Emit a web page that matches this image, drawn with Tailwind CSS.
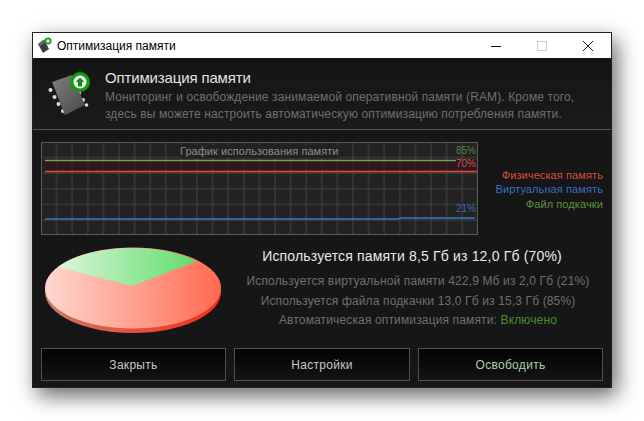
<!DOCTYPE html>
<html lang="en">
<head>
    <meta charset="UTF-8">
    <title>Оптимизация памяти</title>
    <script src="https://cdn.jsdelivr.net/npm/@tailwindcss/browser@4"></script>
</head>
<body class="bg-white w-[644px] h-[421px] overflow-hidden font-['Liberation_Sans',sans-serif]">
    <div class="pt-8 pl-8">
        <div class="w-[580px] h-[356px] flex flex-col bg-[#161616] border border-[#222] shadow-[5px_8px_20px_rgba(0,0,0,0.6)]">
            <!-- title bar -->
            <div class="h-[25px] bg-white flex items-center shrink-0 text-black">
                <svg class="ml-[3px] w-[17px] h-[17px]" viewBox="0 0 17 17">
                    <path d="M2 7 L8 2.5 L13 12 L7 16 Z" fill="#3c3c3c"/>
                    <path d="M2 7 L8 2.5 L9 5 L4 9 Z" fill="#666"/>
                    <circle cx="12" cy="4" r="3.6" fill="#16a016"/>
                    <circle cx="12" cy="4" r="1.7" fill="#dff5df"/>
                </svg>
                <span class="ml-[4px] text-[12px]">Оптимизация памяти</span>
                <div class="ml-auto flex items-center">
                    <svg class="w-[46px] h-[24px]" viewBox="0 0 46 24"><path d="M18 12.5 H28" stroke="#111" stroke-width="1"/></svg>
                    <svg class="w-[46px] h-[24px]" viewBox="0 0 46 24"><rect x="18.5" y="7.5" width="9" height="9" fill="none" stroke="#ccc"/></svg>
                    <svg class="w-[46px] h-[24px]" viewBox="0 0 46 24"><path d="M18 7 L28 17 M28 7 L18 17" stroke="#111" stroke-width="1"/></svg>
                </div>
            </div>

            <!-- header -->
            <div class="h-[72px] shrink-0 flex border-b border-[#555] bg-gradient-to-b from-[#141414] to-[#1b1b1b]">
                <svg class="ml-[15px] mt-[14px] w-[44px] h-[46px] shrink-0" viewBox="0 0 44 46">
                    <defs>
                        <linearGradient id="chip" x1="0" y1="0" x2="1" y2="1">
                            <stop offset="0" stop-color="#808080"/>
                            <stop offset="1" stop-color="#484848"/>
                        </linearGradient>
                    </defs>
                    <g fill="#ddd">
                        <circle cx="2.5" cy="18" r="2"/><circle cx="6.5" cy="25" r="2"/><circle cx="10.5" cy="32" r="2"/><circle cx="15" cy="39" r="2"/>
                        <circle cx="31" cy="21" r="2"/><circle cx="35" cy="28" r="2"/><circle cx="38.5" cy="33" r="1.8"/>
                    </g>
                    <path d="M4 10 L24 3 L37 33 L17 43 Z" fill="url(#chip)"/>
                    <circle cx="32" cy="10" r="10" fill="#0e9e0e"/>
                    <circle cx="32" cy="10" r="6.5" fill="#fff"/>
                    <path d="M32 5.5 L36.5 10 L34 10 L34 14.5 L30 14.5 L30 10 L27.5 10 Z" fill="#0f8f0f"/>
                </svg>
                <div class="ml-[13px] flex flex-col pt-[11px]">
                    <h1 class="text-[15px] leading-[18px] text-[#e2e2e2] tracking-[-0.15px]">Оптимизация памяти</h1>
                    <p class="mt-[2px] text-[12px] leading-[17px] text-[#6f6f6f] tracking-[0.12px] whitespace-nowrap">
                        Мониторинг и освобождение занимаемой оперативной памяти (RAM). Кроме того,<br>
                        здесь вы можете настроить автоматическую оптимизацию потребления памяти.
                    </p>
                </div>
            </div>

            <!-- graph and legend -->
            <div class="flex mt-[12px] ml-[8px] shrink-0">
                <div class="relative w-[437px] h-[93px] shrink-0">
                    <svg class="absolute inset-0" width="437" height="93" viewBox="0 0 437 93">
                        <defs>
                            <pattern id="grid" x="7.8" y="7.8" width="15.6" height="15.6" patternUnits="userSpaceOnUse">
                                <path d="M7.8 0 V15.6 M0 7.8 H15.6" stroke="#444" stroke-width="1" fill="none"/>
                            </pattern>
                        </defs>
                        <rect x="0.5" y="0.5" width="436" height="92" fill="#222"/>
                        <rect x="0.5" y="0.5" width="436" height="92" fill="url(#grid)"/>
                        <rect x="4" y="19" width="432" height="10" fill="#3a0f1e" opacity="0.55"/>
                        <rect x="0.5" y="0.5" width="436" height="92" fill="none" stroke="#5a5a5a"/>
                        <path d="M4 18.5 H415" stroke="#74a84a" stroke-width="1.3"/>
                        <path d="M4 29.5 H436" stroke="#e04a32" stroke-width="1.5"/>
                        <path d="M4 77 H357 L359 76 H434" stroke="#3a76c0" stroke-width="1.3" fill="none"/>
                    </svg>
                    <span class="absolute left-[139px] top-[3px] text-[11px] leading-[13px] text-[#8a8a8a] bg-[#222] tracking-[0.05px]">График использования памяти</span>
                    <span class="absolute right-[2px] top-[3px] text-[10px] leading-[12px] text-[#5c7f3c]">85%</span>
                    <span class="absolute right-[2px] top-[16px] text-[10px] leading-[12px] text-[#cc5048]">70%</span>
                    <span class="absolute right-[2px] top-[61px] text-[10px] leading-[12px] text-[#3c6aa8]">21%</span>
                </div>
                <div class="w-[125px] mt-[26px] text-right text-[11px] leading-[14.3px] tracking-[0.1px]">
                    <div class="text-[#d4503c]">Физическая память</div>
                    <div class="text-[#3a6fc4]">Виртуальная память</div>
                    <div class="text-[#5f8f3c]">Файл подкачки</div>
                </div>
            </div>

            <!-- pie and stats -->
            <div class="flex mt-[12px] shrink-0 h-[100px]">
                <svg class="ml-[12px] w-[178px] h-[88px] shrink-0" viewBox="0 0 178 88">
                    <defs>
                        <linearGradient id="red" x1="0" y1="0" x2="1" y2="0">
                            <stop offset="0" stop-color="#ffd8d0"/>
                            <stop offset="1" stop-color="#ff6a50"/>
                        </linearGradient>
                        <linearGradient id="green" x1="0" y1="0" x2="1" y2="0">
                            <stop offset="0" stop-color="#dcf6dc"/>
                            <stop offset="1" stop-color="#5fdc6a"/>
                        </linearGradient>
                        <linearGradient id="side" x1="0" y1="0" x2="1" y2="0">
                            <stop offset="0" stop-color="#c87a66"/>
                            <stop offset="1" stop-color="#ff2a14"/>
                        </linearGradient>
                    </defs>
                    <ellipse cx="88" cy="45" rx="88" ry="41" fill="url(#side)"/>
                    <ellipse cx="88" cy="41" rx="88" ry="40.5" fill="url(#red)"/>
                    <path d="M13 20 A88 40.5 0 0 1 152 14 L 87 39 Z" fill="url(#green)"/>
                </svg>
                <div class="flex-1 flex flex-col items-center pl-[4px] pr-[14px]">
                    <div class="text-[14px] leading-[18px] text-[#e8e8e8] tracking-[0.17px]">Используется памяти 8,5 Гб из 12,0 Гб (70%)</div>
                    <div class="mt-[7px] ml-[12px] text-[12px] leading-[19.5px] text-[#6f6f6f] tracking-[0.14px] text-center whitespace-nowrap">
                        <div>Используется виртуальной памяти 422,9 Мб из 2,0 Гб (21%)</div>
                        <div>Используется файла подкачки 13,0 Гб из 15,3 Гб (85%)</div>
                        <div>Автоматическая оптимизация памяти: <span class="text-[#4e8a2e]">Включено</span></div>
                    </div>
                </div>
            </div>

            <!-- buttons -->
            <div class="flex gap-[8px] ml-[8px] mt-[1px] shrink-0">
                <button class="w-[185px] h-[33px] border border-[#4f4f4f] bg-gradient-to-b from-[#040404] to-[#141414] text-[12px] tracking-[0.3px] text-[#c8c8c8]">Закрыть</button>
                <button class="w-[176px] h-[33px] border border-[#4f4f4f] bg-gradient-to-b from-[#040404] to-[#141414] text-[12px] tracking-[0.3px] text-[#c8c8c8]">Настройки</button>
                <button class="w-[185px] h-[33px] border border-[#4f4f4f] bg-gradient-to-b from-[#040404] to-[#141414] text-[12px] tracking-[0.3px] text-[#a9cfa4]">Освободить</button>
            </div>
        </div>
    </div>
</body>
</html>
